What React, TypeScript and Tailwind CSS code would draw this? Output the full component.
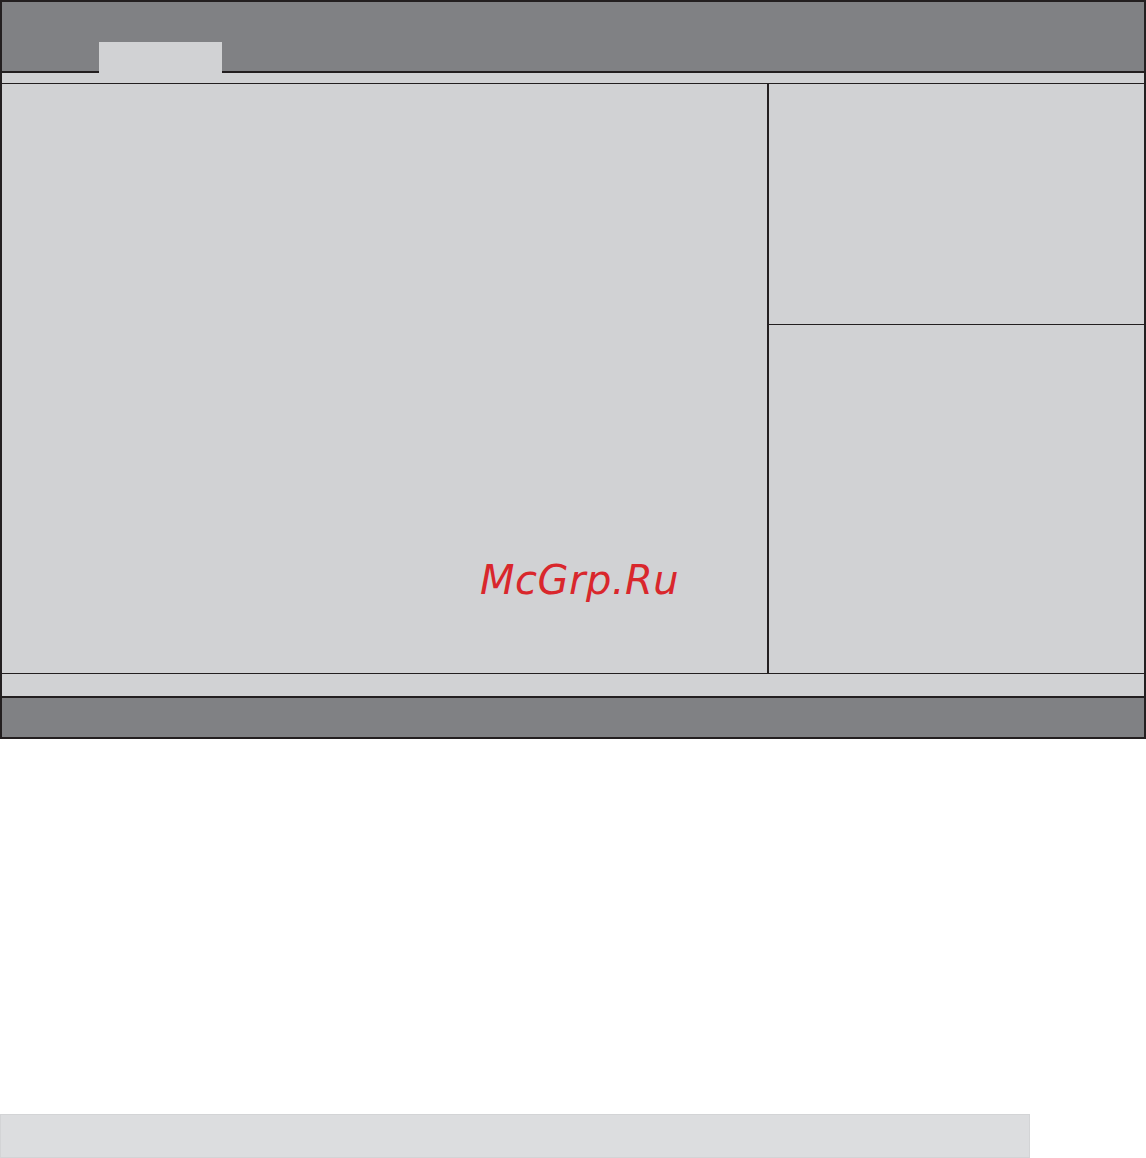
export default function App() {
  return (
    <div className="w-[1146px] h-[1158px] bg-white flex flex-col">
      <div className="w-[1146px] h-[739px] border-2 border-[#231f20] flex flex-col bg-[#d1d2d4]">
        {/* top bar with active tab */}
        <div className="h-[71px] shrink-0 bg-[#808184] border-b-2 border-[#231f20] flex items-end">
          <div className="ml-[97px] w-[123px] h-[31px] -mb-[2px] bg-[#d1d2d4]" />
        </div>
        <div className="h-[11px] shrink-0 border-b border-[#231f20]" />

        {/* main area */}
        <div className="h-[590px] shrink-0 flex border-b border-[#231f20]">
          <div className="relative w-[767px] shrink-0 border-r-2 border-[#231f20]">
            <span
              className="absolute left-[478px] top-[476px] text-[40px] leading-none italic text-[#d9272c] tracking-[0.5px]"
              style={{ fontFamily: '"DejaVu Sans", sans-serif' }}
            >
              McGrp.Ru
            </span>
          </div>
          <div className="flex-1 flex flex-col">
            <div className="h-[241px] shrink-0 border-b border-[#231f20]" />
            <div className="flex-1" />
          </div>
        </div>

        <div className="h-[24px] shrink-0 border-b-2 border-[#231f20]" />
        <div className="flex-1 bg-[#808184]" />
      </div>

      <div className="mt-[375px] w-[1030px] h-[44px] bg-[#dcdddf] border border-[#d3d4d6]" />
    </div>
  );
}
